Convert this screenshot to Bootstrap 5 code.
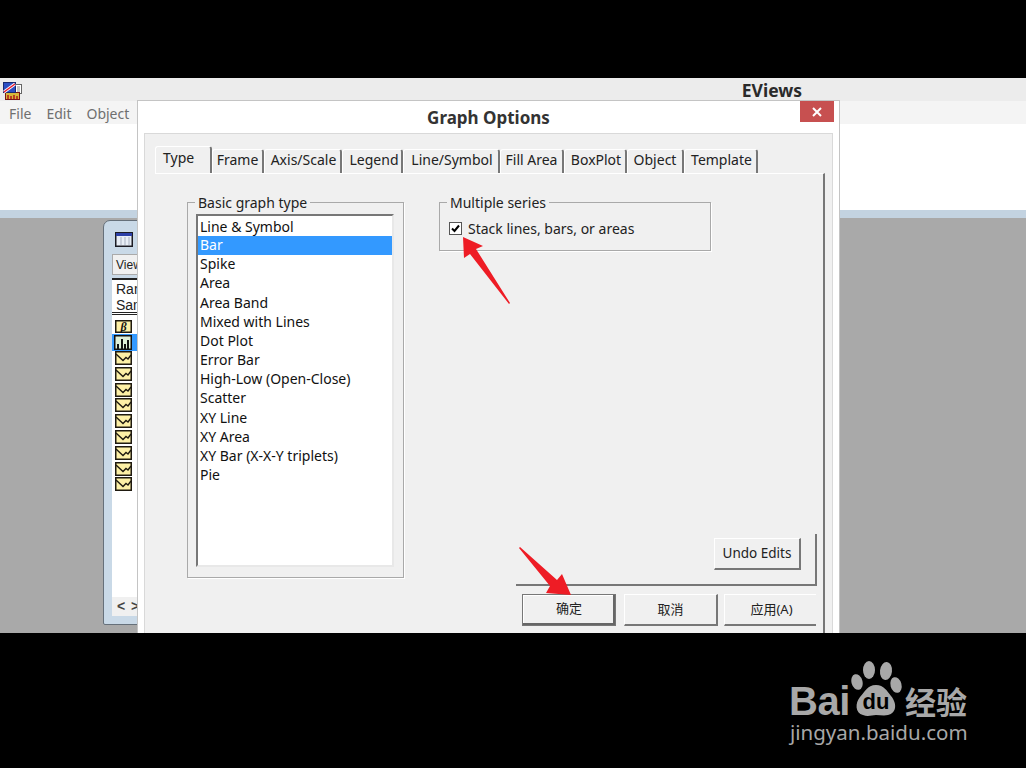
<!DOCTYPE html>
<html lang="en">
<head>
  <meta charset="UTF-8">
  <meta name="viewport" content="width=device-width, initial-scale=1.0">
  <title>Graph Options</title>
  <link href="https://cdn.jsdelivr.net/npm/bootstrap@5.3.0/dist/css/bootstrap.min.css" rel="stylesheet">
  <style>
    body { background: #000; margin: 0; height: 768px; overflow: hidden; font-family: "Noto Sans", "Noto Sans CJK SC", sans-serif; font-size: 14px; color: #222; }
    .stage { width: 1026px; height: 768px; position: relative; overflow: hidden; }
    .desk { position: absolute; left: 0; top: 78px; width: 1026px; height: 555px; overflow: hidden; background: #a9a9a9; display: flex; flex-direction: column; }
    .app-title { height: 23px; background: #ececec; padding-left: 2px; padding-right: 224px; font-size: 17.5px; font-weight: 700; line-height: 24px; color: #2a2a2a; }
    .app-menu { height: 23px; background: #f4f4f4; color: #6f6f6f; padding-left: 9px; gap: 15px; line-height: 25px; }
    .app-white { height: 86px; background: #fff; }
    .app-strip { height: 8px; background: #c3d3e1; }

    .child-win { position: absolute; left: 103px; top: 142px; width: 60px; height: 405px; background: #c9d9e7; border: 1px solid #66707a; border-radius: 7px 0 0 2px; padding: 11px 0 8px 8px; }
    .child-ico { margin-left: 3px; display: block; flex: none; }
    .view-btn { width: 40px; height: 21px; margin-top: 7px; background: #f0f0f0; border: 1px solid #aaa; border-radius: 0; font: 12px/20px "Liberation Sans", sans-serif; padding: 0 3px; color: #222; flex: none; }
    .child-body { background: #fff; flex: 1; margin-top: 3px; border-top: 2px solid #222; }
    .child-info { height: 35px; font: 14px/16px "Liberation Sans", sans-serif; padding: 1px 0 0 4px; border-bottom: 3px double #222; flex: none; }
    .obj-row { height: 15.8px; padding-left: 3px; display: flex; align-items: flex-start; flex: none; }
    .obj-row.beta { height: 14px; margin-top: 5px; }
    .obj-row.on { background: #3399ff; height: 17px; padding-left: 2px; padding-top: 1px; }
    .scroll-row { height: 19px; background: #f0f0f0; font: 700 14px/19px "Liberation Sans", sans-serif; color: #444; padding-left: 5px; letter-spacing: 1px; flex: none; }

    .dlg { position: absolute; left: 137px; top: 22px; width: 703px; height: 533px; background: #fff; border: 1px solid #c4c4c4; border-bottom: 0; display: flex; flex-direction: column; padding: 0 6px; }
    .dlg-title { height: 32px; flex: none; text-align: center; font-size: 17px; font-weight: 700; line-height: 34px; color: #333; }
    .dlg-close { position: absolute; right: 5px; top: 0; width: 34px; height: 21px; background: #c75050; color: #fff; border: 0; border-radius: 0; padding: 0; display: flex; align-items: center; justify-content: center; }
    .dlg-pane { flex: 1; background: #f0f0f0; border: 1px solid #d9d9d9; border-bottom: 0; padding: 12px 9px 0 10px; display: flex; flex-direction: column; }
    .nav-tabs.xp-tabs { border: 0; height: 27px; flex-wrap: nowrap; align-items: flex-end; flex: none; }
    .xp-tabs .tab-item { height: 24px; line-height: 20px; border-top: 1px solid #fff; border-left: 1px solid #fff; border-right: 2px solid #777; border-radius: 3px 3px 0 0; color: #222; background: #f0f0f0; white-space: nowrap; display: flex; justify-content: center; }
    .xp-tabs .tab-item:nth-child(1) { height: 27px; width: 57px; padding-left: 7px; line-height: 22px; justify-content: flex-start; }
    .xp-tabs .tab-item:nth-child(2) { width: 52px; }
    .xp-tabs .tab-item:nth-child(3) { width: 78px; padding-left: 2px; }
    .xp-tabs .tab-item:nth-child(4) { width: 61px; padding-left: 4px; }
    .xp-tabs .tab-item:nth-child(5) { width: 97px; padding-left: 2px; }
    .xp-tabs .tab-item:nth-child(6) { width: 64px; }
    .xp-tabs .tab-item:nth-child(7) { width: 63px; padding-left: 2px; }
    .xp-tabs .tab-item:nth-child(8) { width: 57px; }
    .xp-tabs .tab-item:nth-child(9) { width: 74px; padding-left: 2px; }
    .tab-wrap { flex: 1; width: 670px; border-top: 1px solid #fff; border-right: 2px solid #777; }
    .tab-body { height: 411px; position: relative; padding: 28px 0 0 32px; gap: 35px; }
    .grp { border: 1px solid #a9a9a9; box-shadow: 1px 1px 0 #fff; position: relative; }
    .grp-label { position: absolute; left: 7px; top: -9px; background: #f0f0f0; padding: 0 3px; line-height: 18px; white-space: nowrap; }
    .grp-type { width: 217px; height: 376px; padding: 11px 9px 10px 8px; }
    .grp-multi { width: 272px; height: 49px; padding: 19px 0 0 9px; gap: 6px; }
    .list-box { height: 100%; background: #fff; border: 2px solid #777; border-right-color: #e8e8e8; border-bottom-color: #e8e8e8; border-radius: 0; padding-top: 2px; }
    .list-box .list-group-item { border: 0; border-radius: 0; padding: 0 0 0 2px; height: 19.17px; line-height: 17px; color: #111; background: transparent; flex: none; }
    .list-box .list-group-item.active { background: #3399ff; color: #fff; }
    .chk { width: 13px; height: 13px; background: #fff; border: 1px solid #555; display: flex; align-items: center; justify-content: center; flex: none; }
    .multi-text { line-height: 13px; }
    .win-btn { background: #f0f0f0; border: 1px solid #fff; border-right: 2px solid #777; border-bottom: 2px solid #777; border-radius: 0; font-size: 13px; color: #222; padding: 0; }
    .undo-btn { position: absolute; left: 559px; top: 364px; width: 87px; height: 32px; font-size: 13.5px; }
    .edge-v { position: absolute; left: 660px; top: 360px; width: 2px; height: 50px; background: #777; }
    .edge-h { position: absolute; left: 361px; top: 410px; width: 301px; height: 2px; background: #777; }
    .ok-row { padding-left: 367px; margin-top: 9px; gap: 8px; }
    .ok-row .win-btn { height: 32px; width: 94px; }
    .ok-row .win-btn.is-default { padding-left: 2px; outline: 1px solid #777; outline-offset: -1px; border-width: 1px 3px 3px 1px; border-color: #777 #666 #666 #777; box-shadow: inset 1px 1px 0 #fff; }
    .ok-row .win-btn.apply { width: 92px; margin-left: -2px; border-right: 0; padding-left: 2px; }

    .arrow-layer { position: absolute; left: 0; top: 0; pointer-events: none; }
    .wm { position: absolute; left: 787px; top: 658px; width: 190px; height: 90px; color: #a8a8a8; }
    .wm-bai { position: absolute; left: 2px; top: 23px; font: 700 40px/40px "Liberation Sans", sans-serif; letter-spacing: -.5px; }
    .wm-paw { position: absolute; left: 63px; top: 2px; }
    .wm-du { position: absolute; left: 71px; top: 33px; width: 36px; text-align: center; font: 700 22px/22px "Liberation Sans", sans-serif; color: #000; }
    .wm-cn { position: absolute; left: 118px; top: 26px; font: 700 31px/34px "Noto Sans CJK SC", sans-serif; white-space: nowrap; }
    .wm-url { position: absolute; left: 3px; top: 63px; font: 20.5px/22px "Noto Sans", sans-serif; white-space: nowrap; }
  </style>
</head>
<body>
  <svg width="0" height="0" class="position-absolute">
    <symbol id="ico-line" viewBox="0 0 17 14">
      <rect x=".75" y=".75" width="15.5" height="12.5" fill="#fdf0a6" stroke="#1f1a10" stroke-width="1.5"/>
      <path d="M1 3l7 6.500 3-3 2 1.500 3-4" fill="none" stroke="#1f1a10" stroke-width="1.4"/>
    </symbol>
  </svg>

  <div class="stage">
    <div class="desk">
      <div class="app-title d-flex justify-content-between">
        <svg width="21" height="22" viewBox="0 0 21 22">
          <rect x="13.500" y="6.500" width="6" height="9" fill="#fff" stroke="#666"/>
          <path d="M15 9h3M15 11h3M15 13h3" stroke="#888"/>
          <rect x="3.500" y="14.500" width="14" height="7" fill="#d8b83a" stroke="#7a1515"/>
          <path d="M6 21v-4M9 21v-3M12 21v-4M15 21v-3" stroke="#b01818" stroke-width="1.500"/>
          <rect x="1.500" y="4.500" width="12" height="10" fill="#2c4fc4" stroke="#1a2a70"/>
          <path d="M2 14L13 6" stroke="#fff" stroke-width="3"/>
          <path d="M2 14L13 6" stroke="#e8192c" stroke-width="1.500"/>
        </svg>
        <span>EViews</span>
      </div>
      <div class="app-menu d-flex"><span>File</span><span>Edit</span><span>Object</span></div>
      <div class="app-white"></div>
      <div class="app-strip"></div>

      <div class="child-win d-flex flex-column">
        <svg class="child-ico" width="18" height="15" viewBox="0 0 18 15">
          <rect x=".75" y=".75" width="16.5" height="13.500" fill="#e8eef6" stroke="#1c1c24" stroke-width="1.500"/>
          <rect x="1" y="1" width="16" height="3" fill="#2b3fa8"/>
          <path d="M6 5v8M10 5v8M14 5v8" stroke="#a8b0c0"/>
        </svg>
        <button class="btn view-btn text-start overflow-hidden">View</button>
        <div class="child-body d-flex flex-column">
          <div class="child-info">Range<br>Sample</div>
          <div class="obj-row beta">
            <svg width="17" height="13" viewBox="0 0 17 13"><rect x=".75" y=".75" width="15.500" height="11.500" fill="#fdf0a6" stroke="#1f1a10" stroke-width="1.500"/><text x="8.500" y="10.500" text-anchor="middle" font-family="Liberation Serif" font-style="italic" font-weight="700" font-size="12" fill="#111">β</text></svg>
          </div>
          <div class="obj-row on">
            <svg width="18" height="15" viewBox="0 0 18 15"><rect x=".75" y=".75" width="16.500" height="13.500" fill="#dff0d8" stroke="#111" stroke-width="1.500"/><path d="M4 14V9M8 14V4M11 14V9M14 14V5" stroke="#111" stroke-width="2"/></svg>
          </div>
          <div id="objList"></div>
          <div class="flex-fill"></div>
          <div class="scroll-row">&lt; &gt;</div>
        </div>
      </div>

      <div class="dlg">
        <div class="dlg-title">Graph Options</div>
        <button class="btn dlg-close" aria-label="Close">
          <svg width="10" height="10" viewBox="0 0 10 10"><path d="M1 1l8 8M9 1l-8 8" stroke="#fff" stroke-width="2"/></svg>
        </button>
        <div class="dlg-pane">
          <ul class="nav nav-tabs xp-tabs">
            <li class="tab-item">Type</li>
            <li class="tab-item">Frame</li>
            <li class="tab-item">Axis/Scale</li>
            <li class="tab-item">Legend</li>
            <li class="tab-item">Line/Symbol</li>
            <li class="tab-item">Fill Area</li>
            <li class="tab-item">BoxPlot</li>
            <li class="tab-item">Object</li>
            <li class="tab-item">Template</li>
          </ul>
          <div class="tab-wrap">
            <div class="tab-body d-flex align-items-start">
              <div class="grp grp-type">
                <span class="grp-label">Basic graph type</span>
                <div class="list-group list-box" id="typeList"></div>
              </div>
              <div class="grp grp-multi d-flex align-items-start">
                <span class="grp-label">Multiple series</span>
                <span class="chk"><svg width="9" height="9" viewBox="0 0 9 9"><path d="M1 4.500l2.500 2.500L8 1.500" fill="none" stroke="#000" stroke-width="2"/></svg></span>
                <span class="multi-text">Stack lines, bars, or areas</span>
              </div>
              <button class="btn win-btn undo-btn">Undo Edits</button>
              <div class="edge-v"></div>
              <div class="edge-h"></div>
            </div>
            <div class="ok-row d-flex">
              <button class="btn win-btn is-default">确定</button>
              <button class="btn win-btn">取消</button>
              <button class="btn win-btn apply">应用(A)</button>
            </div>
          </div>
        </div>
      </div>
    </div>

    <svg class="arrow-layer" width="1026" height="768" viewBox="0 0 1026 768">
      <path d="M463 237l1 21 6-4 39 50 1-1-34-54 7-3z" fill="#ee1c25"/>
      <path d="M571 595l-25-2 4-7-31-38 1-1 37 33 5-6z" fill="#ee1c25"/>
    </svg>

    <div class="wm">
      <span class="wm-bai">Bai</span>
      <svg class="wm-paw" width="56" height="60" viewBox="0 0 56 60" fill="#a8a8a8">
        <ellipse cx="19" cy="10" rx="6" ry="9"/>
        <ellipse cx="36" cy="11" rx="6" ry="9" transform="rotate(6 36 11)"/>
        <ellipse cx="7" cy="22" rx="5.500" ry="8" transform="rotate(-15 7 22)"/>
        <ellipse cx="46" cy="25" rx="5.500" ry="8" transform="rotate(-15 46 25)"/>
        <path d="M26 25c8 0 11 6 15 11 6 7 6 17-3 19-4 1-8 0-12 0s-8 2-13 0c-8-2-8-12-3-18 5-5 7-12 16-12z"/>
      </svg>
      <span class="wm-du">du</span>
      <span class="wm-cn">经验</span>
      <span class="wm-url">jingyan.baidu.com</span>
    </div>
  </div>

  <script>
    const types = ['Line & Symbol', 'Bar', 'Spike', 'Area', 'Area Band', 'Mixed with Lines', 'Dot Plot', 'Error Bar',
      'High-Low (Open-Close)', 'Scatter', 'XY Line', 'XY Area', 'XY Bar (X-X-Y triplets)', 'Pie'];
    document.getElementById('typeList').innerHTML = types.map(t =>
      `<div class="list-group-item${t === 'Bar' ? ' active' : ''}">${t.replace('&', '&amp;')}</div>`).join('');

    let rows = '';
    for (let i = 0; i < 9; i++) {
      rows += '<div class="obj-row"><svg width="17" height="14"><use href="#ico-line"/></svg></div>';
    }
    document.getElementById('objList').innerHTML = rows;
  </script>
  <script src="https://cdn.jsdelivr.net/npm/bootstrap@5.3.0/dist/js/bootstrap.bundle.min.js"></script>
</body>
</html>
